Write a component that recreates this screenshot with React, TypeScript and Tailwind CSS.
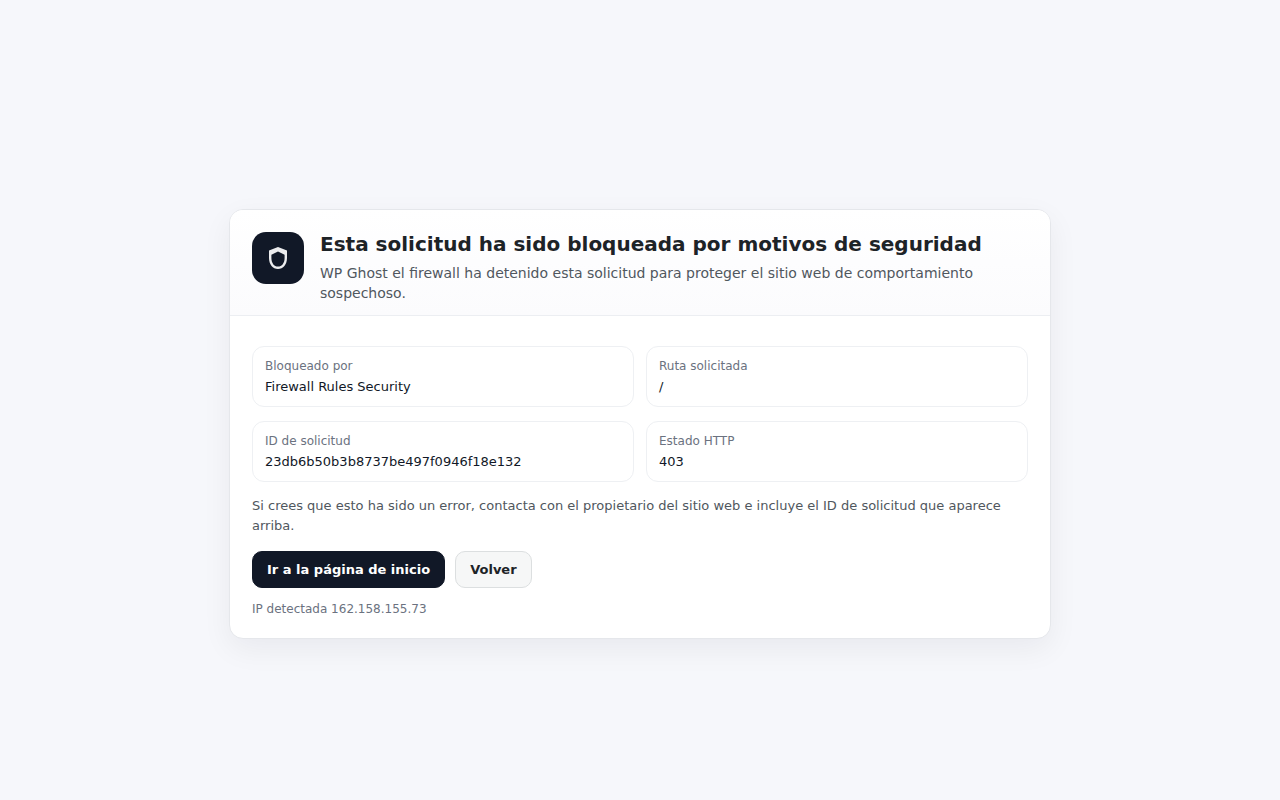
import React from 'react';

const details = [
  { label: 'Bloqueado por', value: 'Firewall Rules Security' },
  { label: 'Ruta solicitada', value: '/' },
  { label: 'ID de solicitud', value: '23db6b50b3b8737be497f0946f18e132' },
  { label: 'Estado HTTP', value: '403' },
];

const ShieldIcon = () => (
  <svg width="26" height="26" viewBox="0 0 26 26" fill="none" aria-hidden="true">
    <path
      fill="#fff"
      fillOpacity="0.92"
      fillRule="evenodd"
      d="M13 2L22 5.6V13C22 19.4 18.2 24 13 24C7.8 24 4 19.4 4 13V5.6L13 2ZM13 6.4L6.4 9.8V13C6.4 17.9 9.1 21.6 13 21.6C16.9 21.6 19.6 17.9 19.6 13V9.8L13 6.4Z"
    />
  </svg>
);

const App = () => {
  return (
    <div className="flex min-h-screen items-center justify-center bg-[#f6f7fb] px-6 pt-12 font-['DejaVu_Sans',sans-serif]">
      <main className="w-full max-w-[822px] overflow-hidden rounded-[14px] border border-[#e5e7eb] bg-white shadow-[0_10px_30px_rgba(17,24,39,0.06)]">
        {/* Header */}
        <header className="flex items-start gap-4 border-b border-[#eceef2] bg-linear-to-b from-white to-[#fbfbfd] px-[22px] pt-[22px] pb-3">
          <div className="flex size-[52px] shrink-0 items-center justify-center rounded-[14px] bg-[#111827]">
            <ShieldIcon />
          </div>
          <div>
            <h1 className="text-xl leading-6 font-bold text-[#1d2327]">
              Esta solicitud ha sido bloqueada por motivos de seguridad
            </h1>
            <p className="mt-[7px] text-sm leading-5 text-[#50575e]">
              WP Ghost el firewall ha detenido esta solicitud para proteger el sitio web de comportamiento sospechoso.
            </p>
          </div>
        </header>

        <div className="px-[22px] pt-[30px] pb-5">
          {/* Request details */}
          <dl className="grid grid-cols-1 gap-x-3 gap-y-3.5 sm:grid-cols-2">
            {details.map((item) => (
              <div key={item.label} className="rounded-xl border border-[#eef0f3] px-3 py-2.5">
                <dt className="text-xs leading-[18px] text-[#6b7280]">{item.label}</dt>
                <dd className="mt-0.5 text-[13px] leading-[19px] break-words text-[#111827]">{item.value}</dd>
              </div>
            ))}
          </dl>

          <p className="mt-3.5 text-[13px] leading-5 text-[#50575e]">
            Si crees que esto ha sido un error, contacta con el propietario del sitio web e incluye el ID de solicitud
            que aparece arriba.
          </p>

          {/* Actions */}
          <div className="mt-[15px] flex flex-wrap gap-2.5">
            <a
              href="/"
              className="rounded-[10px] border border-[#111827] bg-[#111827] px-3.5 py-2 text-[13px] leading-[19px] font-bold text-white"
            >
              Ir a la página de inicio
            </a>
            <button
              type="button"
              onClick={() => window.history.back()}
              className="cursor-pointer rounded-[10px] border border-[#dcdfe0] bg-[#f6f7f7] px-3.5 py-2 text-[13px] leading-[19px] font-bold text-[#1d2327]"
            >
              Volver
            </button>
          </div>

          <p className="mt-3 text-xs leading-[18px] text-[#6b7280]">IP detectada 162.158.155.73</p>
        </div>
      </main>
    </div>
  );
};

export default App;
